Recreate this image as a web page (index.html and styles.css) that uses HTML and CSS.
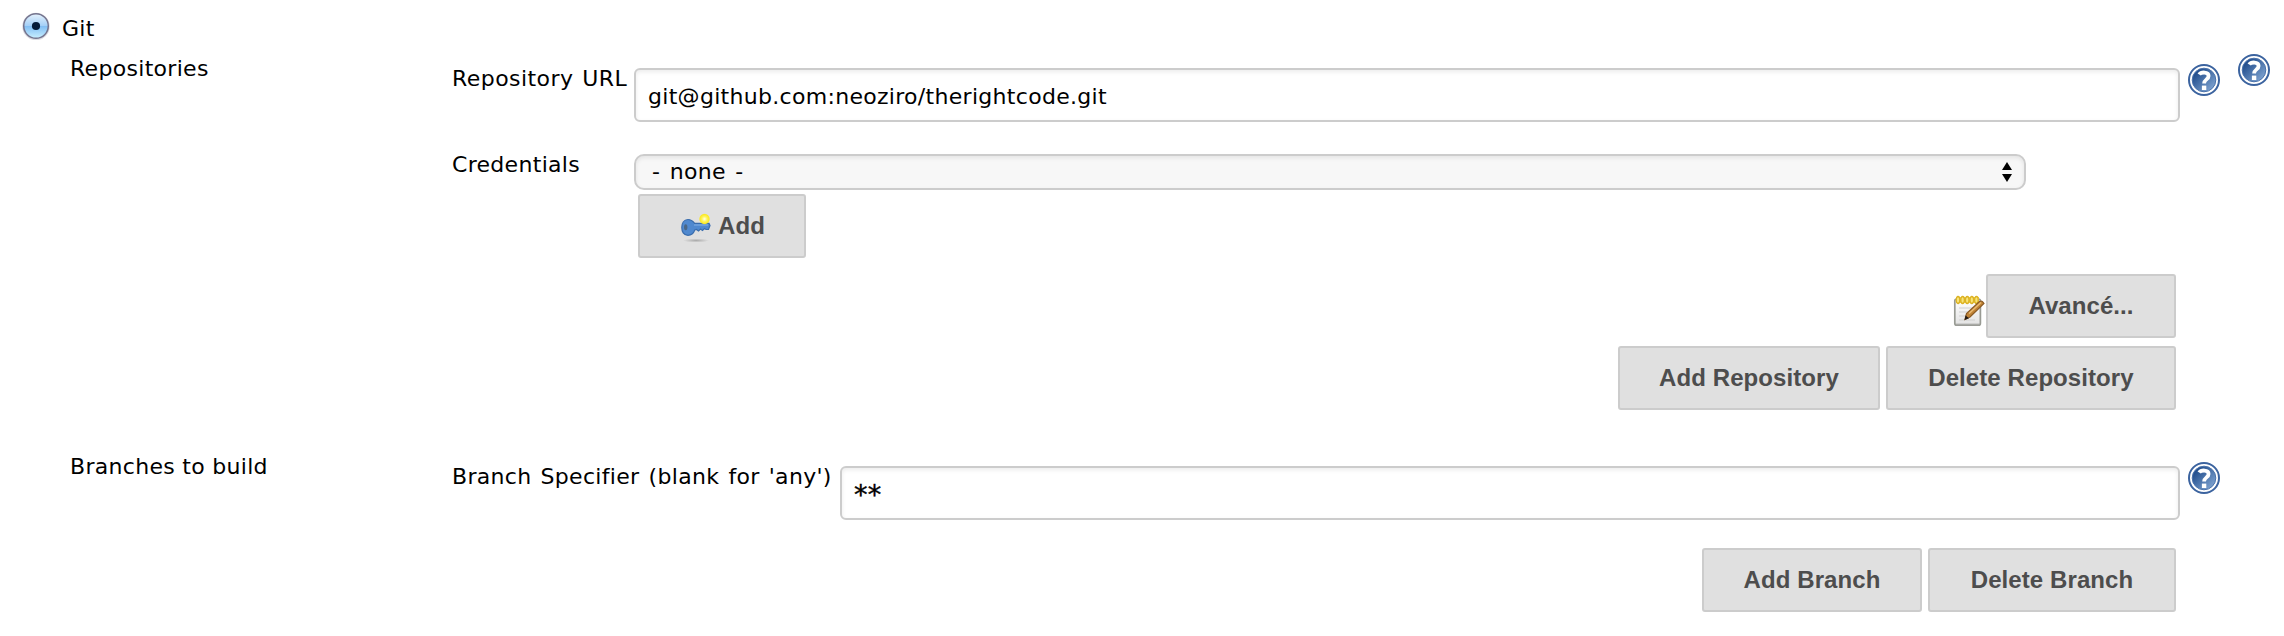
FILE: index.html
```html
<!DOCTYPE html>
<html lang="fr">
<head>
<meta charset="utf-8">
<title>Git</title>
<link rel="stylesheet" href="styles.css">
</head>
<body>
<svg class="defs" width="0" height="0" aria-hidden="true">
  <defs>
    <linearGradient id="helpFill" x1="0" y1="0" x2="1" y2="1">
      <stop offset="0.2" stop-color="#24508f"/><stop offset="1" stop-color="#8fb2dc"/>
    </linearGradient>
    <symbol id="help" viewBox="0 0 32 32">
      <circle cx="16" cy="16" r="15" fill="#fff" stroke="#3b639f" stroke-width="2"/>
      <circle cx="16" cy="16" r="11.8" fill="url(#helpFill)" stroke="#4a72ab" stroke-width="1"/>
      <path d="M11.2 10.6C12.8 8 20.6 7.2 20.6 12C20.6 15.6 16.1 15.2 16.1 19.6" fill="none" stroke="#fff" stroke-width="3.8"/>
      <rect x="13.9" y="21.6" width="4.4" height="4.4" fill="#fff"/>
    </symbol>
  </defs>
</svg>
<main class="scm">
  <label class="choice">
    <svg class="radio" viewBox="0 0 28 28">
      <defs><linearGradient id="radioFill" x1="0" y1="0" x2="0" y2="1">
        <stop offset="0" stop-color="#e6f2fc"/><stop offset="0.48" stop-color="#a5d0f7"/>
        <stop offset="0.52" stop-color="#83bff4"/><stop offset="1" stop-color="#c9f0ff"/>
      </linearGradient></defs>
      <circle cx="14" cy="14.5" r="13" fill="none" stroke="#dcdce2" stroke-width="1.5"/>
      <circle cx="14" cy="14" r="12.3" fill="url(#radioFill)" stroke="#74748e" stroke-width="1.5"/>
      <circle cx="14" cy="14" r="4.1" fill="#051b38"/>
    </svg>
    <span>Git</span>
  </label>

  <section class="section repositories">
    <h2 class="title">Repositories</h2>
    <div class="fields">
      <div class="row">
        <label class="label url-label">Repository URL</label>
        <div class="input url">git@github.com:neoziro/therightcode.git</div>
        <svg class="help"><use href="#help"/></svg>
      </div>
      <div class="row credentials">
        <label class="label">Credentials</label>
        <div class="control">
          <div class="select"><span>- none -</span>
            <svg class="arrows" viewBox="0 0 10 20"><path d="M5 0L10 8H0ZM0 12H10L5 20Z"/></svg>
          </div>
          <button class="button add">
            <svg class="key" viewBox="0 0 32 32">
              <defs>
                <radialGradient id="shadow"><stop offset="0" stop-color="#aaa"/><stop offset="1" stop-color="#aaa" stop-opacity="0"/></radialGradient>
                <radialGradient id="spark"><stop offset="0" stop-color="#fffff0"/><stop offset="0.45" stop-color="#fff45c"/><stop offset="0.8" stop-color="#fbea25"/><stop offset="1" stop-color="#fbea25" stop-opacity="0"/></radialGradient>
              </defs>
              <ellipse cx="16" cy="28.5" rx="13" ry="2" fill="url(#shadow)"/>
              <path d="M8 7.5C12 7.5 13.5 10 14.5 11.3H29L30 13.5L28.5 17.5H26L24.5 16.5L22.5 18.5L20.5 17L18.5 19L16.5 17.5L14.8 18C13.5 21.5 11 23.3 8 23.3C3.5 23.3 1.8 19.5 1.8 15.4C1.8 11 4 7.5 8 7.5Z" fill="#5089cf" stroke="#3a6dad" stroke-width="1.2"/>
              <path d="M14 13H28" stroke="#76a6de" stroke-width="1.4"/>
              <ellipse cx="5.7" cy="15.3" rx="1.7" ry="3" fill="#4b6785"/>
              <circle cx="24.5" cy="7" r="5.7" fill="url(#spark)"/>
            </svg><span>Add</span>
          </button>
        </div>
      </div>
      <div class="actions advanced">
        <svg class="note" viewBox="0 0 32 32">
          <defs><linearGradient id="paper" x1="0" y1="0" x2="0" y2="1"><stop offset="0" stop-color="#fff"/><stop offset="1" stop-color="#e2e2e2"/></linearGradient></defs>
          <rect x="1.8" y="4" width="25.6" height="26.2" rx="2" fill="url(#paper)" stroke="#999b94" stroke-width="1.7"/>
          <path d="M3 29.4H26.5" stroke="#a9aaa6" stroke-width="1.5"/>
          <path d="M6 13H22M6 17H19M6 21H16M6 25H22" stroke="#cfcfcf" stroke-width="1.2"/>
          <path d="M3 2H26V8H3Z" fill="#f3d545"/>
          <g fill="#f8e579" stroke="#dcb224" stroke-width="1.3"><ellipse cx="5" cy="5" rx="1.8" ry="3.5"/><ellipse cx="9.6" cy="5" rx="1.8" ry="3.5"/><ellipse cx="14.2" cy="5" rx="1.8" ry="3.5"/><ellipse cx="18.8" cy="5" rx="1.8" ry="3.5"/><ellipse cx="23.4" cy="5" rx="1.8" ry="3.5"/></g>
          <path d="M12 24.5L13.5 18.5L26.5 6.5Q29 5 31 8.5L17 22Z" fill="#c08335" stroke="#8a5a24" stroke-width="1.2"/>
          <path d="M16 18.5L28 7.5" stroke="#e9ba72" stroke-width="1.6"/>
          <path d="M11.5 25L12.6 20.5L16 23.3Z" fill="#221a15"/>
        </svg>
        <button class="button avance">Avancé...</button>
      </div>
      <div class="actions repo-actions">
        <button class="button add-repo">Add Repository</button>
        <button class="button del-repo">Delete Repository</button>
      </div>
    </div>
    <svg class="help outer"><use href="#help"/></svg>
  </section>

  <section class="section branches">
    <h2 class="title">Branches to build</h2>
    <div class="fields">
      <div class="row">
        <label class="label branch-label">Branch Specifier (blank for 'any')</label>
        <div class="input specifier">**</div>
        <svg class="help"><use href="#help"/></svg>
      </div>
      <div class="actions branch-actions">
        <button class="button add-branch">Add Branch</button>
        <button class="button del-branch">Delete Branch</button>
      </div>
    </div>
  </section>
</main>
</body>
</html>
```
FILE: styles.css
```css
* { box-sizing: border-box; }
body {
  margin: 0;
  background: #fff;
  color: #000;
  font: 22px/26px Verdana, "DejaVu Sans", sans-serif;
  letter-spacing: 0.3px;
}
svg { display: block; flex: none; }
.defs { position: absolute; }
.scm { width: 2284px; height: 636px; padding: 12px 14px 0 22px; overflow: hidden; }
.choice { display: flex; height: 40px; gap: 12px; }
.choice span { padding-top: 4px; }
.radio { width: 28px; height: 28px; }
.section { display: flex; align-items: flex-start; white-space: nowrap; }
.repositories { height: 402px; }
.title { width: 382px; margin: 0; padding: 4px 0 0 48px; font: inherit; }
.fields { width: 1768px; margin: 0 18px 0 48px; }
.row { display: flex; align-items: flex-start; padding-top: 12px; }
.label { width: 182px; padding-top: 2px; }
.url-label { letter-spacing: 0.45px; word-spacing: 1.3px; }
.branch-label { width: 388px; word-spacing: 1.9px; }
.input {
  height: 54px;
  margin-top: 4px;
  padding: 14px 12px 0;
  border: 2px solid #ccc;
  border-radius: 6px;
  box-shadow: inset 0 2px 4px rgba(0, 0, 0, 0.08);
}
.url { width: 1546px; }
.specifier { width: 1340px; font-size: 27px; -webkit-text-stroke: 0.4px #000; }
.help { width: 32px; height: 32px; margin-left: 8px; }
.outer { margin: 2px 0 0; }
.credentials { padding-top: 28px; }
.select {
  display: flex;
  justify-content: space-between;
  width: 1392px;
  height: 36px;
  margin-top: 4px;
  padding: 3px 12px 0 16px;
  border: 2px solid #ccc;
  border-radius: 10px;
  background: #f7f7f7;
  box-shadow: inset 0 2px 4px rgba(0, 0, 0, 0.08);
  word-spacing: 2.2px;
}
.arrows { width: 10px; height: 20px; margin-top: 3px; }
.button {
  height: 64px;
  padding: 0;
  border: 2px solid #ccc;
  border-radius: 3px;
  background: #e0e0e0;
  color: #4d4d4d;
  font: bold 24px/28px Helvetica, "Liberation Sans", sans-serif;
  letter-spacing: 0.08px;
}
.add { display: flex; width: 168px; margin: 4px 0 0 4px; padding: 16px 0 0 40px; }
.key { width: 32px; height: 32px; }
.add span { margin-left: 6px; }
.actions { display: flex; justify-content: flex-end; width: 1724px; gap: 6px; }
.advanced { gap: 1px; margin-top: 16px; }
.note { width: 32px; height: 32px; margin-top: 21px; }
.avance { width: 190px; }
.repo-actions { margin-top: 8px; }
.add-repo { width: 262px; }
.del-repo { width: 290px; }
.branches .title { padding-top: 0; }
.branches .fields { padding-top: 8px; }
.branches .row { padding-top: 0; }
.branch-actions { margin-top: 28px; }
.add-branch { width: 220px; }
.del-branch { width: 248px; }
```
